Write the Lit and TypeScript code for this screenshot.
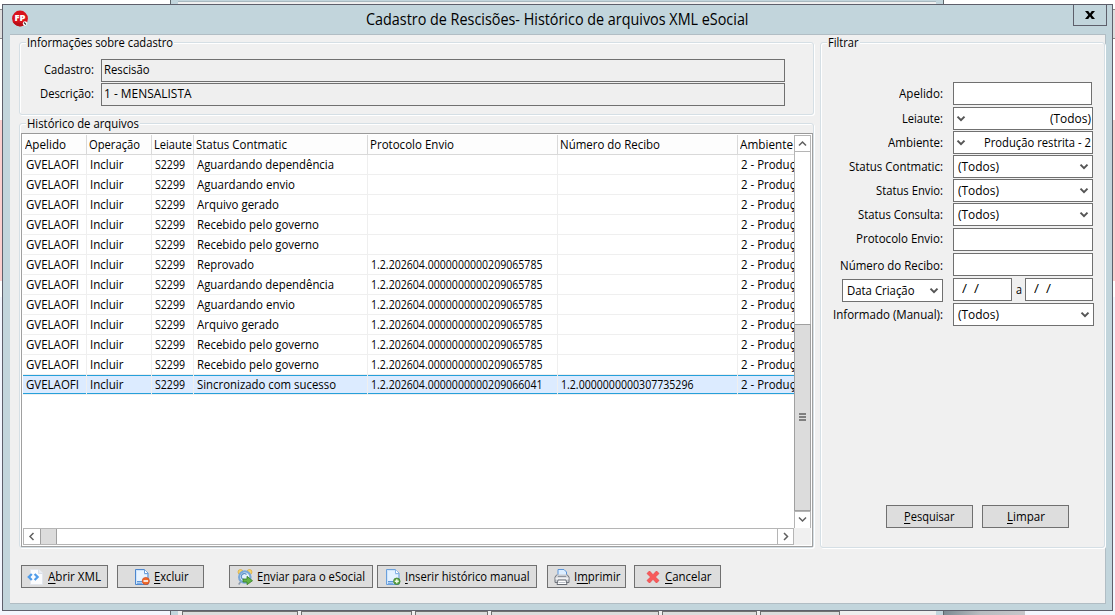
import { LitElement, html, css, svg, nothing } from "lit";
import { customElement, property } from "lit/decorators.js";
import { classMap } from "lit/directives/class-map.js";

/** A run of text condensed so that it fills a given advance width. */
@customElement("ui-text")
class UiText extends LitElement {
  static styles = css`
    :host { display: inline-block; white-space: pre; flex: none; }
    .run { display: inline-block; transform-origin: 0 50%; }
  `;
  @property({ type: Number }) w = 0;
  firstUpdated() {
    const run = this.renderRoot.querySelector(".run") as HTMLElement;
    const natural = run.getBoundingClientRect().width;
    if (!this.w || !natural) return;
    this.style.width = `${this.w}px`;
    run.style.transform = `scaleX(${this.w / natural})`;
  }
  render() {
    return html`<span class="run"><slot></slot></span>`;
  }
}

const icons: Record<string, unknown> = {
  xml: svg`<path d="M3.500.500h8.500l3.500 3.500v11.500h-12z" fill="#fbfcfe" stroke="#e3e7ee"/><path d="M11.500.500v4h4" fill="#e9edf4" stroke="#d9dfe8"/><path d="M4.800 5 1.800 8l3 3M7.600 5l3 3-3 3" fill="none" stroke="#4f9cea" stroke-width="2.300"/>`,
  excluir: svg`<path d="M1.500.500h9l3.500 3.500v11.500H1.500z" fill="#cfe5fb" stroke="#4d87cf"/><path d="M3 2h7v4h3v6H3z" fill="#e9f4ff"/><path d="M10.500.500v4h3.500" fill="#fff" stroke="#6b9fdb"/><path d="M3 12.500h5M3 14.200h5" stroke="#5b94d8"/><circle cx="11.800" cy="12" r="3.600" fill="#ef6a2b" stroke="#cf481c" stroke-width=".7"/><path d="M9.500 12h4.600" stroke="#fff" stroke-width="1.600"/>`,
  enviar: svg`<circle cx="3.500" cy="3" r="2.500" fill="#f5d36a" stroke="#d9a93c" stroke-width=".7"/><circle cx="12.500" cy="3" r="2.500" fill="#f5d36a" stroke="#d9a93c" stroke-width=".7"/><path d="m3.500 13-1.800 2.500" stroke="#8a97a8" stroke-width="1.500"/><circle cx="7.800" cy="8" r="5.700" fill="#e4f1fc" stroke="#79a8d8" stroke-width="2.200"/><path d="M9.500 5.500A3 3 0 1 0 7 10.500" fill="none" stroke="#5c8fc4" stroke-width="1.200"/><path d="M6 10h4V7.300l5.500 4.400-5.500 4V13H6z" fill="#63b344" stroke="#357d27" stroke-width=".8"/>`,
  inserir: svg`<path d="M1.500.500h9l3.500 3.500v11.500H1.500z" fill="#cfe5fb" stroke="#6aa0dc"/><path d="M3 2h7v4h3v6H3z" fill="#e4f2ff"/><path d="M10.500.500v4h3.500" fill="#fff" stroke="#86b3e6"/><path d="M3 12.500h5M3 14.200h5" stroke="#5b94d8"/><circle cx="11.800" cy="12.300" r="3.300" fill="#5fa545" stroke="#3d7d2c" stroke-width=".7"/><path d="M9.800 12.300h4M11.800 10.300v4" stroke="#f2fbe9" stroke-width="1.400"/>`,
  imprimir: svg`<path d="M4 .500h6l2.500 2.500v5H4z" fill="#dceeff" stroke="#5b94d8"/><path d="M3 5.500 1 8v5.500h14V8l-2-2.500" fill="#c9ccd1" stroke="#70757d"/><path d="M4 7.500h8" stroke="#8d939c"/><rect x="1.500" y="8.500" width="13" height="2" fill="#f1f2f4"/><path d="M4 11h8l1 4.500H3z" fill="#fff" stroke="#696e76"/><path d="M4.500 13.500h7" stroke="#bcc2ca"/>`,
  cancelar: svg`<path d="M4.500 2 8 5.700 11.500 2 14 4.500 10.400 8 14 11.500 11.500 14 8 10.300 4.500 14 2 11.500 5.600 8 2 4.500z" fill="#f85a5a" stroke="#e8474b" stroke-width=".8"/>`,
};

const cols = [
  { label: "Apelido", w: 41 },
  { label: "Operação", w: 51 },
  { label: "Leiaute", w: 38 },
  { label: "Status Contmatic", w: 91 },
  { label: "Protocolo Envio", w: 84 },
  { label: "Número do Recibo", w: 100 },
  { label: "Ambiente", w: 53 },
];

const statuses: [string, number][] = [
  ["Aguardando dependência", 137],
  ["Aguardando envio", 98],
  ["Arquivo gerado", 82],
  ["Recebido pelo governo", 122],
  ["Recebido pelo governo", 122],
  ["Reprovado", 57],
  ["Aguardando dependência", 137],
  ["Aguardando envio", 98],
  ["Arquivo gerado", 82],
  ["Recebido pelo governo", 122],
  ["Recebido pelo governo", 122],
  ["Sincronizado com sucesso", 139],
];

const rows = statuses.map(([status, w], i) => ({
  selected: i === 11,
  cells: [
    ["GVELAOFI", 53],
    ["Incluir", 33.5],
    ["S2299", 30],
    [status, w],
    [i < 5 ? "" : i < 11 ? "1.2.202604.0000000000209065785" : "1.2.202604.0000000000209066041", 171.5],
    [i === 11 ? "1.2.0000000000307735296" : "", 132.5],
    ["2 - Produção restrita", 109],
  ] as [string, number][],
}));

@customElement("app-root")
class AppRoot extends LitElement {
  static styles = css`
    :host { display: block; }
    * { box-sizing: border-box; }
    .screen { position: relative; width: 1115px; height: 615px; overflow: hidden; background: #fff; color: #000;
      font: 12.3px/16px "Open Sans", "Noto Sans", sans-serif; display: flex; flex-direction: column; }
    u { text-decoration: none; border-bottom: 1px solid #000; display: inline-block; line-height: 12px; }

    /* windows left open behind the dialog */
    .behind-top, .behind-bottom { display: flex; flex: none; }
    .behind-top { height: 4px; padding-left: 170px; }
    .behind-top .win { width: 774px; background: #c2d5dc; border: solid #5e666b; border-width: 0 1px; padding: 1px 7px 0; }
    .behind-top .win div { height: 3px; background: #efefef; border-top: 1px solid #a9b9c0; }
    .middle { display: flex; height: 607px; flex: none; }
    .strip { width: 2px; display: flex; flex-direction: column; flex: none; }
    .s1 { height: 5px; } .s2 { height: 30px; background: #dedede; border: solid #8a8a8a; border-width: 1px 0; }
    .s3 { height: 81px; } .s4 { height: 161px; background: #fbcfcf; } .s5 { height: 16px; } .s6 { flex: 1; background: #f3f6fe; }
    .behind-bottom { height: 4px; background: #f3f6fe; }
    .behind-bottom .win { margin-left: 170px; width: 774px; background: #efefef; border-left: 1px solid #5e666b; border-right: 1px solid #5e666b; display: flex; }
    .edge { width: 7px; background: #c2d5dc; flex: none; }
    .edge.right { margin-left: auto; }
    .stubs { display: flex; gap: 3px; padding: 0 0 0 4px; }
    .stub { background: #dcdcdc; border: 1px solid #707070; border-bottom: 0; height: 4px; }
    .photo { width: 81px; background: linear-gradient(100deg, #7c8a92, #b8bcc0 45%, #c6c6ca); }

    .dialog { width: 1111px; height: 607px; background: #c2d5dc; border: 1px solid #5e5f6b; flex: none; display: flex; flex-direction: column; }
    .titlebar { height: 29px; flex: none; display: grid; grid-template-columns: 362px 1fr 40px; }
    .logo { margin: 5px 0 0 9px; width: 18px; height: 18px; }
    .title { font-size: 15.400px; line-height: 20px; padding: 5px 0 0 1px; }
    .close { width: 34px; height: 22px; margin-top: -1px; border: 1px solid #5e5f6b; display: flex; justify-content: center; align-items: center; justify-self: start; margin-left: 1px; }
    .client { margin: 0 6px 0 7px; height: 570px; background: #f0f0f0; border: solid #b1bdc4; border-width: 1px 1px 1px 0; }
    .panes { display: flex; gap: 6px; padding: 0 0 0 9px; }
    .left { width: 795px; }
    .group { border: 1px solid #d5dfe5; border-radius: 3px; box-shadow: inset 1px 1px 0 #fff, 1px 1px 0 #fff; }
    .legend { display: block; width: max-content; height: 16px; margin: -8px 0 0 6px; background: #f0f0f0; padding: 0 1px; }
    .g-info { margin-top: 7px; height: 73px; }
    .pair { display: flex; align-items: center; height: 23px; margin-bottom: 1px; }
    .pair .lab { width: 74px; margin-right: 7px; display: flex; justify-content: flex-end; padding-bottom: 1px; }
    .info-body { padding-top: 8px; }
    .box { height: 23px; border: 1px solid #707070; background: #fff; display: flex; align-items: center; flex: none; }
    .box.ro { width: 684px; background: #efefef; padding: 0 0 1px 2px; }
    .g-hist { margin-top: 8px; height: 425px; }

    .grid { width: 792px; height: 414px; margin: 1px 0 0 1px; border: 1px solid #a0a0a0; border-top-color: #999; background: #fff; padding: 1px; }
    .upper { display: flex; height: 393px; }
    .table { width: 771px; overflow: hidden; }
    .row { display: grid; grid-template-columns: 64px 65px 42px 174px 190px 180px 58px; height: 20px; width: 773px; }
    .cell { border-right: 1px solid #efefef; border-bottom: 1px solid #efefef; padding: 2px 0 0 3px; overflow: hidden; white-space: nowrap; }
    .head .cell { border-color: #d9d9d9; background: #fdfdfd; padding-left: 2px; }
    .sel .cell { background: linear-gradient(#26a0da, #26a0da) 0 0/100% 1px no-repeat, linear-gradient(#26a0da, #26a0da) 0 18px/100% 1px no-repeat, #dcebff; }
    .vbar { width: 17px; display: flex; flex-direction: column; background: #fff; border: solid #b5b5b5; border-width: 0 1px; }
    .sb { flex: none; display: flex; align-items: center; justify-content: center; border: 0 solid #b5b5b5; }
    .up { height: 17px; border-width: 1px 0; }
    .down { height: 16px; border-top-width: 1px; }
    .vthumb { height: 187px; margin: 172px -1px 0; background: #dcdcdc; border: 1px solid #a0a0a0; display: flex; justify-content: center; align-items: center; padding-bottom: 1px; }
    .hbar { height: 17px; width: 771px; display: flex; border: 1px solid #b5b5b5; background: #fff; }
    .hbar .sb { width: 16px; padding-right: 2px; }
    .hthumb { width: 17px; background: #dcdcdc; border: solid #a0a0a0; border-width: 0 1px; }
    .hbar .rt { margin-left: auto; border-left-width: 1px; width: 16px; padding-right: 0; }
    .foot { display: flex; height: 17px; background: #f0f0f0; }

    .g-filter { width: 285px; height: 506px; margin-top: 7px; }
    .filters { padding-top: 31px; }
    .f { display: flex; align-items: center; height: 23px; margin-bottom: 1px; }
    .f .lab { width: 122px; margin-right: 10px; display: flex; justify-content: flex-end; flex: none; }
    .f .box { width: 140px; padding: 0 3px 0 3.500px; justify-content: space-between; }
    .f.first .box { width: 139px; } .f.first { margin-bottom: 2px; }
    .f .box.rtl { padding: 0 1px 0 2px; }
    .f.gap1 { margin-bottom: 2px; }
    .f.high .lab { padding-bottom: 1px; }
    .f.low .lab { padding-top: 3px; }
    .f.last .box { width: 141px; }
    .f .box.kind { width: 101px; margin-top: 2px; }
    .f .box.d1 { width: 59px; padding-left: 8px; padding-bottom: 2px; } .f .box.d2 { width: 68px; padding-left: 8px; padding-bottom: 2px; }
    .a { width: 13px; display: flex; justify-content: center; }
    .acts { display: flex; gap: 9px; padding: 178px 0 0 65px; }
    .btn { height: 23px; border: 1px solid #707070; background: #dddddd; display: flex; align-items: center; flex: none; padding: 0; font: inherit; color: #000; }
    .btn.c { width: 87px; justify-content: center; }
    .btn svg { flex: none; }
    .bar { display: flex; padding: 17px 0 0 11px; }
  `;

  chevron() {
    return html`<svg width="10" height="8" viewBox="0 0 10 8"><path d="M1.500 1.600 5 5.100 8.500 1.600" fill="none" stroke="#555" stroke-width="2"/></svg>`;
  }

  arrow(d: string) {
    return html`<svg width="11" height="11" viewBox="0 0 11 11"><path d=${d} fill="none" stroke="#606060" stroke-width="1.500"/></svg>`;
  }

  filter(label: string, w: number, kind: string, value = "", vw = 0, extra = "") {
    const text = value ? html`<ui-text w=${vw}>${value}</ui-text>` : nothing;
    return html`<div class="f ${extra}">
      <span class="lab"><ui-text w=${w}>${label}</ui-text></span>
      <div class=${classMap({ box: true, rtl: kind === "rtl" })}>
        ${kind === "rtl" ? html`${this.chevron()}${text}` : kind === "select" ? html`${text}${this.chevron()}` : nothing}
      </div>
    </div>`;
  }

  action(icon: string, key: number, label: string, w: number, width: number, pad: number, gap: number, before: number) {
    return html`<button class="btn" style="width:${width}px;margin-left:${before}px;padding-left:${pad}px;gap:${gap}px">
      <svg width="16" height="16" viewBox="0 0 16 16">${icons[icon]}</svg>
      <ui-text w=${w}>${label.slice(0, key)}<u>${label[key]}</u>${label.slice(key + 1)}</ui-text>
    </button>`;
  }

  strip() {
    return html`<div class="strip"><div class="s1"></div><div class="s2"></div><div class="s3"></div><div class="s4"></div><div class="s5"></div><div class="s6"></div></div>`;
  }

  render() {
    return html`<div class="screen">
      <div class="behind-top"><div class="win"><div></div></div></div>
      <div class="middle">
        ${this.strip()}
        <div class="dialog">
          <div class="titlebar">
            <svg class="logo" viewBox="0 0 18 18"><circle cx="8" cy="8.500" r="7.900" fill="#d8121c"/><path d="M1 12a7.900 7.900 0 0 0 13 1.500z" fill="#b90d16"/><text x="8" y="11.400" text-anchor="middle" font-family="Open Sans, sans-serif" font-weight="800" font-size="9" textLength="11" lengthAdjust="spacingAndGlyphs" fill="#fff">FP</text><circle cx="13" cy="13.500" r="2.200" fill="#fff"/><path d="m12 12.500 2 2" stroke="#333" stroke-width="1.100"/></svg>
            <div class="title"><ui-text w="382.500">Cadastro de Rescisões- Histórico de arquivos XML eSocial</ui-text></div>
            <div class="close"><svg width="10" height="8" viewBox="0 0 10 8"><path d="M0 0h3.200L5 2.400 6.800 0H10L6.700 4 10 8H6.800L5 5.600 3.200 8H0l3.300-4z" fill="#000"/></svg></div>
          </div>
          <div class="client">
            <div class="panes">
              <div class="left">
                <div class="group g-info">
                  <span class="legend"><ui-text w="146">Informações sobre cadastro</ui-text></span>
                  <div class="info-body">
                    <div class="pair"><span class="lab"><ui-text w="50">Cadastro:</ui-text></span><div class="box ro"><ui-text w="45.500">Rescisão</ui-text></div></div>
                    <div class="pair"><span class="lab"><ui-text w="54">Descrição:</ui-text></span><div class="box ro"><ui-text w="87.500">1 - MENSALISTA</ui-text></div></div>
                  </div>
                </div>
                <div class="group g-hist">
                  <span class="legend"><ui-text w="112">Histórico de arquivos</ui-text></span>
                  <div class="grid">
                    <div class="upper">
                      <div class="table">
                        <div class="row head">${cols.map((c) => html`<div class="cell"><ui-text w=${c.w}>${c.label}</ui-text></div>`)}</div>
                        ${rows.map((r) => html`<div class=${classMap({ row: true, sel: r.selected })}>
                          ${r.cells.map(([t, w]) => html`<div class="cell">${t ? html`<ui-text w=${w}>${t}</ui-text>` : nothing}</div>`)}
                        </div>`)}
                      </div>
                      <div class="vbar">
                        <div class="sb up">${this.arrow("M2 7.500 5.500 4 9 7.500")}</div>
                        <div class="vthumb"><svg width="8" height="8" viewBox="0 0 8 8"><path d="M0 1h7M0 4h7M0 7h7" stroke="#606060" stroke-width="1.600"/></svg></div>
                        <div class="sb down">${this.arrow("M2 3.500 5.500 7 9 3.500")}</div>
                      </div>
                    </div>
                    <div class="foot">
                      <div class="hbar">
                        <div class="sb">${this.arrow("M7.500 2 4 5.500 7.500 9")}</div>
                        <div class="hthumb"></div>
                        <div class="sb rt">${this.arrow("M4 2 7.500 5.500 4 9")}</div>
                      </div>
                    </div>
                  </div>
                </div>
              </div>
              <div class="group g-filter">
                <span class="legend"><ui-text w="30.500">Filtrar</ui-text></span>
                <div class="filters">
                  ${this.filter("Apelido:", 44, "input", "", 0, "first")}
                  ${this.filter("Leiaute:", 41, "rtl", "(Todos)", 41)}
                  ${this.filter("Ambiente:", 55, "rtl", "Produção restrita - 2", 107)}
                  ${this.filter("Status Contmatic:", 94, "select", "(Todos)", 41)}
                  ${this.filter("Status Envio:", 67, "select", "(Todos)", 41)}
                  ${this.filter("Status Consulta:", 85, "select", "(Todos)", 41, "gap1")}
                  ${this.filter("Protocolo Envio:", 87, "input", "", 0, "gap1 high")}
                  ${this.filter("Número do Recibo:", 103, "input", "", 0, "gap1 low")}
                  <div class="f gap1">
                    <div class="lab"><div class="box kind"><ui-text w="67.500">Data Criação</ui-text>${this.chevron()}</div></div>
                    <div class="box d1"><ui-text w="17">/  /</ui-text></div>
                    <span class="a"><ui-text w="6">a</ui-text></span>
                    <div class="box d2"><ui-text w="17">/  /</ui-text></div>
                  </div>
                  ${this.filter("Informado (Manual):", 110, "select", "(Todos)", 41, "last")}
                </div>
                <div class="acts">
                  <button class="btn c"><ui-text w="50.500"><u>P</u>esquisar</ui-text></button>
                  <button class="btn c"><ui-text w="38"><u>L</u>impar</ui-text></button>
                </div>
              </div>
            </div>
            <div class="bar">
              ${this.action("xml", 0, "Abrir XML", 53, 87, 5, 5, 0)}
              ${this.action("excluir", 0, "Excluir", 34.5, 87, 16, 4, 9)}
              ${this.action("enviar", 1, "Enviar para o eSocial", 108, 144, 7, 4, 25)}
              ${this.action("inserir", 0, "Inserir histórico manual", 124.5, 160, 7, 4, 4)}
              ${this.action("imprimir", 1, "Imprimir", 46.5, 79, 6, 4, 10)}
              ${this.action("cancelar", 0, "Cancelar", 46.5, 87, 10, 4, 8)}
            </div>
          </div>
        </div>
        ${this.strip()}
      </div>
      <div class="behind-bottom">
        <div class="win"><div class="edge"></div>
          <div class="stubs">${[116, 111, 73, 168, 95, 80].map((w) => html`<div class="stub" style="width:${w}px"></div>`)}</div>
          <div class="edge right"></div></div>
        <div class="photo"></div>
      </div>
    </div>`;
  }
}
